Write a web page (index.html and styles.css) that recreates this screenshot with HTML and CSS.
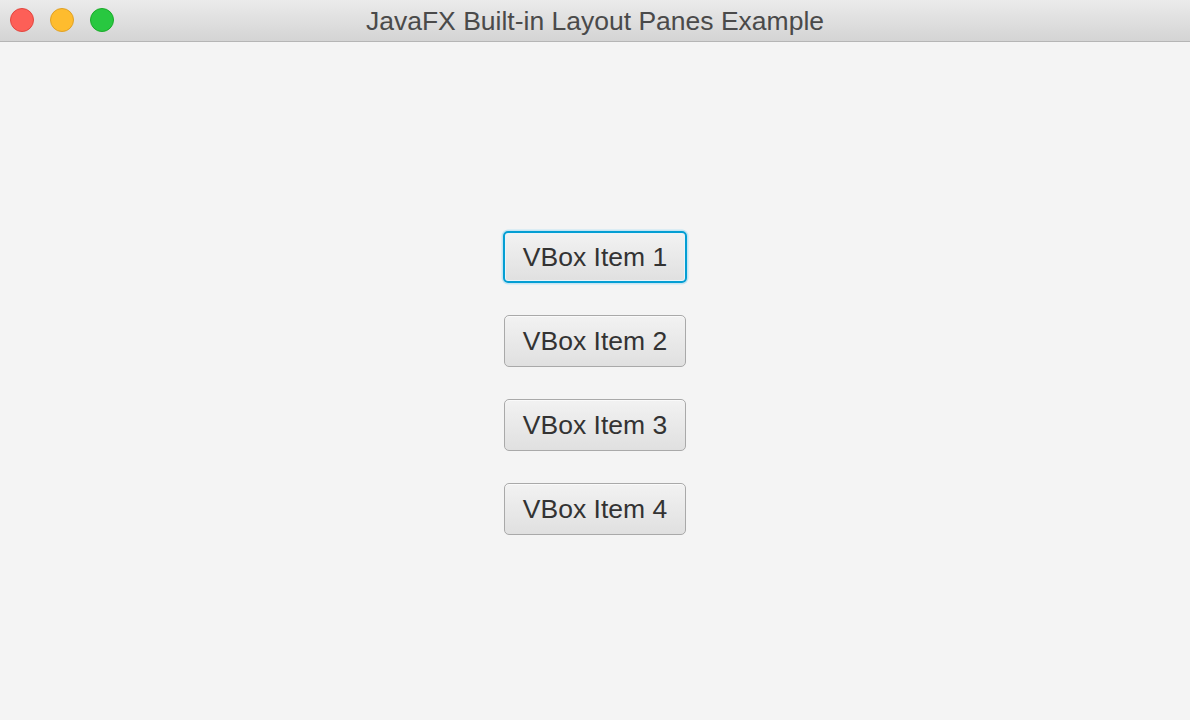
FILE: index.html
```html
<!DOCTYPE html>
<html>
<head>
<meta charset="utf-8">
<link rel="stylesheet" href="styles.css">
</head>
<body>
<div class="window">
  <div class="titlebar">
    <div class="lights">
      <span class="light red"></span>
      <span class="light yellow"></span>
      <span class="light green"></span>
    </div>
    <div class="title">JavaFX Built-in Layout Panes Example</div>
  </div>
  <div class="content">
    <div class="vbox">
      <button class="btn focused">VBox Item 1</button>
      <button class="btn">VBox Item 2</button>
      <button class="btn">VBox Item 3</button>
      <button class="btn">VBox Item 4</button>
    </div>
  </div>
</div>
</body>
</html>
```
FILE: styles.css
```css
html, body {
  margin: 0;
  padding: 0;
  width: 1190px;
  height: 720px;
  overflow: hidden;
  background: #f4f4f4;
  font-family: "Liberation Sans", Arial, sans-serif;
}
.window {
  display: flex;
  flex-direction: column;
  height: 720px;
}
.titlebar {
  height: 41px;
  flex: 0 0 41px;
  background: linear-gradient(#ebebeb, #d4d4d4);
  border-bottom: 1px solid #b5b5b5;
  display: flex;
  align-items: center;
  justify-content: center;
  position: relative;
}
.lights {
  position: absolute;
  left: 10px;
  top: 8px;
  display: flex;
  gap: 16px;
}
.light {
  width: 24px;
  height: 24px;
  border-radius: 50%;
  display: block;
  box-sizing: border-box;
}
.red { background: #fd5f57; border: 1px solid #e2463f; }
.yellow { background: #febc2e; border: 1px solid #e0a125; }
.green { background: #28c840; border: 1px solid #1aab29; }
.title {
  font-size: 26.5px;
  color: #4a4a4a;
  margin-top: 1px;
}
.content {
  flex: 1;
  display: flex;
  align-items: center;
  justify-content: center;
}
.vbox {
  display: flex;
  flex-direction: column;
  align-items: center;
  gap: 32px;
  margin-top: 4px;
}
.btn {
  font-family: "Liberation Sans", Arial, sans-serif;
  font-size: 26.5px;
  color: #333333;
  height: 52px;
  padding: 0 18px;
  border: 1.5px solid #a9a9a9;
  border-radius: 5px;
  background: linear-gradient(#f2f2f2, #e0e0e0);
  box-shadow: inset 0 1px 0 #fafafa;
  box-sizing: border-box;
}
.btn.focused {
  border: 2px solid #039ed3;
  padding: 0 17.5px;
  box-shadow: 0 0 0 1.5px #c4e5f3, inset 0 0 0 1px #e8f4fa;
}
```
